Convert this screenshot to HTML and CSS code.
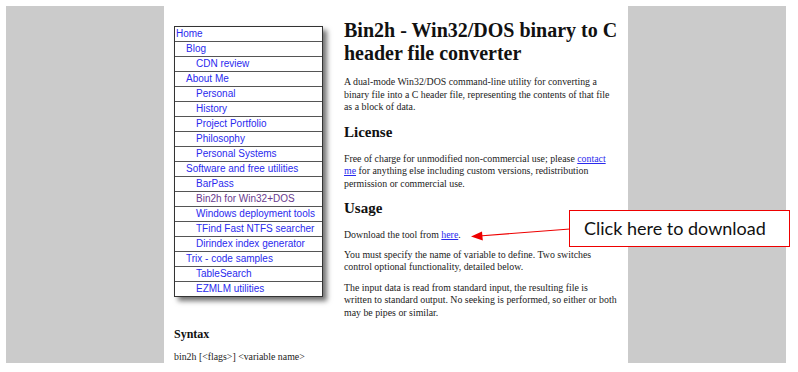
FILE: index.html
```html
<!DOCTYPE html>
<html lang="en">
<head>
  <meta charset="utf-8"/>
  <title>Bin2h - Win32/DOS binary to C header file converter</title>
  <link rel="stylesheet" href="styles.css">
</head>
<body>
  <div class="frame">
    <div class="page">
      <ul class="menu">
        <li><a href="#">Home</a></li>
        <li class="l1"><a href="#">Blog</a></li>
        <li class="l2"><a href="#">CDN review</a></li>
        <li class="l1"><a href="#">About Me</a></li>
        <li class="l2"><a href="#">Personal</a></li>
        <li class="l2"><a href="#">History</a></li>
        <li class="l2"><a href="#">Project Portfolio</a></li>
        <li class="l2"><a href="#">Philosophy</a></li>
        <li class="l2"><a href="#">Personal Systems</a></li>
        <li class="l1"><a href="#">Software and free utilities</a></li>
        <li class="l2"><a href="#">BarPass</a></li>
        <li class="l2"><a class="visited" href="#">Bin2h for Win32+DOS</a></li>
        <li class="l2"><a href="#">Windows deployment tools</a></li>
        <li class="l2"><a href="#">TFind Fast NTFS searcher</a></li>
        <li class="l2"><a href="#">Dirindex index generator</a></li>
        <li class="l1"><a href="#">Trix - code samples</a></li>
        <li class="l2"><a href="#">TableSearch</a></li>
        <li class="l2"><a href="#">EZMLM utilities</a></li>
      </ul>

      <h1>Bin2h - Win32/DOS binary to C header file converter</h1>
      <p>A dual-mode Win32/DOS command-line utility for converting a binary file into a C header file, representing the contents of that file as a block of data.</p>

      <h2>License</h2>
      <p>Free of charge for unmodified non-commercial use; please <a href="#">contact me</a> for anything else including custom versions, redistribution permission or commercial use.</p>

      <h2>Usage</h2>
      <p class="download">Download the tool from <a href="#">here</a>.</p>
      <p>You must specify the name of variable to define. Two switches control optional functionality, detailed below.</p>
      <p>The input data is read from standard input, the resulting file is written to standard output. No seeking is performed, so either or both may be pipes or similar.</p>

      <h3>Syntax</h3>
      <p>bin2h [&lt;flags&gt;] &lt;variable name&gt;</p>
    </div>
  </div>

  <!-- annotation drawn over the screenshot -->
  <svg class="arrow" width="100" height="14" viewBox="0 0 100 14">
    <line x1="99" y1="2" x2="8" y2="9" stroke="#e00" stroke-width="1.2"/>
    <polygon points="0,9.6 11,4.5 11.8,13.6" fill="#e00"/>
  </svg>
  <div class="callout">Click here to download</div>
</body>
</html>
```

FILE: styles.css
```css
body {
  margin: 0;
  background: #fff;
  position: relative;
  height: 372px;
  overflow: hidden;
}
.frame {
  margin: 6px 12px 0 6px;
  height: 357px;
  background: #cbcbcb;
}
.page {
  width: 444px;
  height: 344px;
  margin: 0 auto;
  padding: 13px 10px 0;
  background: #fff;
  overflow: hidden;
  font-family: "Liberation Serif", serif;
  font-size: 9.85px;
  color: #222;
}
.page a {
  color: #2a2aee;
}
.menu {
  float: left;
  width: 149px;
  box-sizing: border-box;
  margin: 7px 21px 12px 0;
  padding: 0;
  list-style: none;
  border: 1px solid #333;
  box-shadow: 4px 4px 5px rgba(0,0,0,0.55);
  background: #fff;
  font-family: "Liberation Sans", sans-serif;
  font-size: 10px;
}
.menu li {
  height: 14px;
  line-height: 14px;
  border-top: 1px solid #555;
  padding-left: 1px;
  white-space: nowrap;
}
.menu li:first-child {
  border-top: none;
}
.menu li.l1 {
  padding-left: 11px;
}
.menu li.l2 {
  padding-left: 21px;
}
.menu a {
  text-decoration: none;
  color: #2a2aee;
}
.menu a.visited {
  color: #6a3a8e;
}
h1 {
  font-size: 20px;
  line-height: 23px;
  margin: 0 0 11px;
  color: #111;
}
h2 {
  font-size: 15px;
  line-height: 17px;
  margin: 10px 0 12px;
  color: #111;
}
h3 {
  font-size: 12px;
  line-height: 14px;
  margin: 8px 0 10px;
  clear: both;
  color: #111;
}
p {
  margin: 0 0 8px;
  line-height: 12.5px;
}
p.download {
  margin-bottom: 7px;
}
.callout {
  position: absolute;
  left: 569px;
  top: 210px;
  width: 221px;
  height: 37px;
  border: 1px solid #e00;
  background: #fff;
  box-sizing: border-box;
  padding-left: 14px;
  line-height: 35px;
  font-family: Lato, "Open Sans", sans-serif;
  font-size: 18px;
  color: #111;
}
.arrow {
  position: absolute;
  left: 471px;
  top: 227px;
}
```
